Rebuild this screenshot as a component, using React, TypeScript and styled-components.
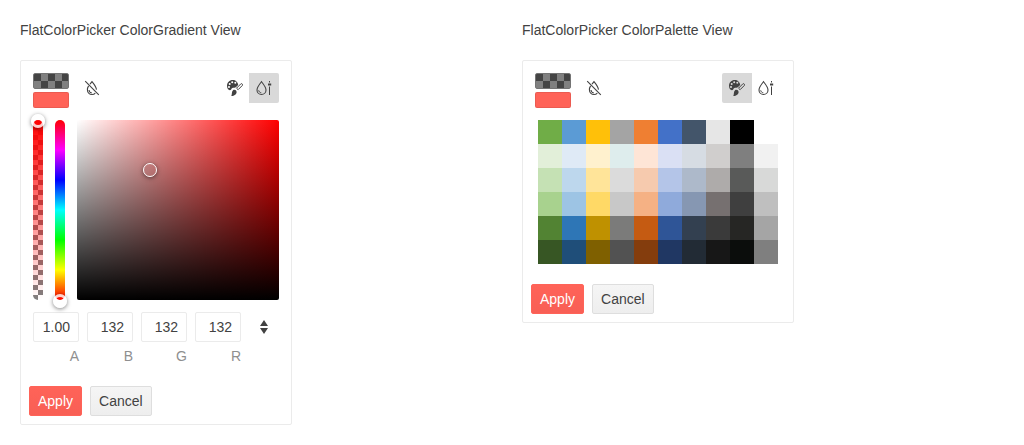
import React, { useId, useState } from 'react';
import styled, { createGlobalStyle, css } from 'styled-components';

const GlobalStyle = createGlobalStyle`
  *, *::before, *::after { box-sizing: border-box; }
  body {
    margin: 0;
    background: #ffffff;
    color: #424242;
    font-family: "Liberation Sans", Arial, sans-serif;
    font-size: 14px;
    line-height: 20px;
  }
  button, input { font: inherit; color: inherit; }
`;

const Page = styled.main`
  display: grid;
  grid-template-columns: 1fr 1fr;
  gap: 20px;
  padding: 20px;
  align-items: start;
`;

const Section = styled.section`
  display: flex;
  flex-direction: column;
  align-items: flex-start;
  gap: 20px;
`;

const Title = styled.h2`
  margin: 0;
  font-size: 14px;
  font-weight: 400;
  line-height: 20px;
`;

const Card = styled.form`
  width: 272px;
  border: 1px solid #ebebeb;
  border-radius: 2px;
  background: #ffffff;
`;

const Header = styled.div`
  display: flex;
  align-items: flex-start;
  gap: 8px;
  padding: 12px 12px 0;
`;

const Preview = styled.div`
  display: flex;
  flex-direction: column;
  gap: 3px;
`;

const Swatch = styled.span<{ $empty?: boolean }>`
  display: block;
  width: 36px;
  height: 16px;
  border: 1px solid rgba(0, 0, 0, 0.08);
  border-radius: 2px;
  background: #ff6358;
  ${(p) =>
    p.$empty &&
    css`
      border-color: #747474;
      background: repeating-conic-gradient(#808080 0 25%, #444444 0 50%) 0 0 / 14px 14px;
    `}
`;

const IconButton = styled.button<{ $active?: boolean; $side?: 'start' | 'end' }>`
  display: flex;
  align-items: center;
  justify-content: center;
  width: 30px;
  height: 30px;
  padding: 0;
  border: 0;
  border-radius: ${(p) =>
    p.$side === 'start' ? '2px 0 0 2px' : p.$side === 'end' ? '0 2px 2px 0' : '2px'};
  background: ${(p) => (p.$active ? '#d9d9d9' : 'transparent')};
  cursor: pointer;
`;

const ViewSwitch = styled.div`
  display: flex;
  margin-left: auto;

  & > * + * {
    margin-left: -1px;
  }
`;

const Body = styled.div`
  padding: 12px;
`;

const Canvas = styled.div`
  display: flex;
  gap: 12px;
  height: 180px;
`;

const Track = styled.div<{ $kind: 'alpha' | 'hue' }>`
  position: relative;
  width: 10px;
  border-radius: 5px;
  background: ${(p) =>
    p.$kind === 'alpha'
      ? 'linear-gradient(to bottom, #ff0000, rgba(255, 0, 0, 0)), repeating-conic-gradient(#808080 0 25%, #ffffff 0 50%) 0 0 / 10px 10px'
      : 'linear-gradient(to top, #ff0000, #ffff00, #00ff00, #00ffff, #0000ff, #ff00ff, #ff0000)'};
`;

const Handle = styled.span<{ $x: string; $y: string; $thin?: boolean }>`
  position: absolute;
  left: ${(p) => p.$x};
  top: ${(p) => p.$y};
  width: 14px;
  height: 14px;
  margin: ${(p) => (p.$thin ? '-7px' : '-6px -7px')};
  border: ${(p) => (p.$thin ? '1px solid #ffffff' : '3px solid rgba(255, 255, 255, 0.8)')};
  border-radius: 50%;
  box-shadow: 0 1px 4px rgba(0, 0, 0, 0.5);
`;

const Gradient = styled.div`
  position: relative;
  flex: 1;
  border-radius: 2px;
  background: linear-gradient(to bottom, transparent, #000000),
    linear-gradient(to right, #ffffff, rgba(255, 255, 255, 0)), #ff0000;
`;

const Channels = styled.div`
  display: flex;
  align-items: flex-start;
  gap: 8px;
  margin-top: 12px;
`;

const Channel = styled.div`
  display: flex;
  flex: 1;
  flex-direction: column;
  gap: 4px;
  text-align: right;
`;

const ChannelInput = styled.input`
  width: 100%;
  height: 30px;
  padding: 4px 8px;
  border: 1px solid #ebebeb;
  border-radius: 2px;
  background: #ffffff;
  text-align: right;
  outline: 0;
`;

const ChannelLabel = styled.label`
  color: #8f8f8f;
`;

const Palette = styled.table`
  margin: 0 auto;
  border-collapse: collapse;
`;

const Tile = styled.td<{ $color: string }>`
  width: 24px;
  height: 24px;
  padding: 0;
  background: ${(p) => p.$color};
`;

const Footer = styled.div`
  display: flex;
  gap: 8px;
  padding: 8px;
`;

const Button = styled.button<{ $primary?: boolean }>`
  height: 30px;
  padding: 4px 8px;
  border: 1px solid ${(p) => (p.$primary ? '#ff6358' : '#dedede')};
  border-radius: 2px;
  background: ${(p) =>
    p.$primary ? 'linear-gradient(#ff6358, #f85f55)' : 'linear-gradient(#f5f5f5, #eeeeee)'};
  color: ${(p) => (p.$primary ? '#ffffff' : '#424242')};
  cursor: pointer;
`;

const DropletSlashIcon = () => (
  <svg width="16" height="16" viewBox="0 0 16 16" fill="none" stroke="#424242" strokeWidth="1.1" aria-hidden="true">
    <path d="M1.200 1.200 14.800 14.800" />
    <path d="M6 4.200 8 1.600c1.600 1.900 4 4.800 4.500 8" />
    <path d="M4.600 5.900C3.800 7.200 3.400 8.500 3.400 9.800c0 2.700 2 4.700 4.600 4.700 1.300 0 2.500-.5 3.300-1.400" />
    <path d="M5 10c.1 1.600 1.100 2.700 2.700 2.900" />
  </svg>
);

const PaletteIcon = () => (
  <svg width="16" height="16" viewBox="0 0 16 16" aria-hidden="true">
    <path
      fill="#424242"
      fillRule="evenodd"
      d="M5.700 0C2.500 0 0 2.600 0 5.800c0 2.500 1.300 4.400 2.900 4.400 1.300 0 1.300-1.700 2.500-2.300 1.300-.6 2.300.2 3.400-.6L11.200 5C10.900 2.100 8.700 0 5.700 0ZM5.200 1.200a1 1 0 1 1 0 2 1 1 0 0 1 0-2ZM8.300 1.800a1 1 0 1 1 0 2 1 1 0 0 1 0-2ZM2.700 2.900a1 1 0 1 1 0 2 1 1 0 0 1 0-2ZM2 5.900a1 1 0 1 1 0 2 1 1 0 0 1 0-2Z"
    />
    <path fill="none" stroke="#424242" strokeLinejoin="round" d="m9.500 8.200 4.400-4.400c.9-.6 2.200.6 1.500 1.600L11.100 9.700Z" />
    <path fill="#424242" d="M6 10.200c1.700-.9 3.500.1 3.600 1.700.1 2.300-2.200 4-5.300 4 1-1.500.1-4.600 1.700-5.700Z" />
  </svg>
);

const DropletSliderIcon = () => (
  <svg width="16" height="16" viewBox="0 0 16 16" fill="none" stroke="#424242" aria-hidden="true">
    <path strokeWidth="1.1" d="M5.500 1.700C3.500 4.200 1 7.200 1 10c0 2.600 2 4.500 4.500 4.500S10 12.600 10 10c0-2.800-2.500-5.800-4.500-8.300Z" />
    <path d="M2.700 10.300c.2 1.400 1.100 2.300 2.600 2.500" />
    <path d="M13.500 1v1.500M13.500 6.500V15" />
    <path strokeWidth="2" d="M12 4.500h3.200" />
  </svg>
);

const SpinIcon = () => (
  <svg width="16" height="16" viewBox="0 0 16 16" fill="#424242" aria-hidden="true">
    <path d="M8 1l4 6H4ZM8 15l4-6H4Z" />
  </svg>
);

const COLORS = [
  ['#70ad47', '#5b9bd5', '#ffc009', '#a4a4a4', '#ef7f32', '#4371c8', '#43556a', '#e6e6e6', '#000000', '#ffffff'],
  ['#e2efd9', '#dfeaf6', '#fff1ce', '#deeded', '#fee5d6', '#dae0f4', '#d6dce3', '#d0cecd', '#7f7f7f', '#f1f1f1'],
  ['#c5e1b4', '#bdd7ed', '#ffe499', '#dbdbdb', '#f6caae', '#b4c5e8', '#adb9ca', '#aeabaa', '#595a59', '#d8d9d8'],
  ['#a8d28e', '#9dc4e4', '#ffd966', '#c8c8c8', '#f5b184', '#8faadb', '#8697b2', '#767070', '#3f3f3f', '#bfbfbf'],
  ['#528333', '#2e76b6', '#bf9100', '#7b7b7a', '#c55b12', '#2f5597', '#334050', '#3a3a3a', '#262624', '#a5a5a5'],
  ['#375624', '#1f4e79', '#7f6000', '#525252', '#843d0d', '#203763', '#222b35', '#171717', '#0b0d0c', '#7f7f7f'],
];

type View = 'gradient' | 'palette';

function PickerHeader({ view }: { view: View }) {
  return (
    <Header>
      <Preview>
        <Swatch $empty />
        <Swatch />
      </Preview>
      <IconButton type="button" aria-label="Clear value">
        <DropletSlashIcon />
      </IconButton>
      <ViewSwitch>
        <IconButton type="button" aria-label="Palette view" $side="start" $active={view === 'palette'} aria-pressed={view === 'palette'}>
          <PaletteIcon />
        </IconButton>
        <IconButton type="button" aria-label="Gradient view" $side="end" $active={view === 'gradient'} aria-pressed={view === 'gradient'}>
          <DropletSliderIcon />
        </IconButton>
      </ViewSwitch>
    </Header>
  );
}

function ChannelField({ name, initial }: { name: string; initial: string }) {
  const id = useId();
  const [value, setValue] = useState(initial);
  return (
    <Channel>
      <ChannelInput id={id} value={value} onChange={(e) => setValue(e.target.value)} />
      <ChannelLabel htmlFor={id}>{name}</ChannelLabel>
    </Channel>
  );
}

function GradientView() {
  return (
    <Body>
      <Canvas>
        <Track $kind="alpha">
          <Handle $x="50%" $y="0" />
        </Track>
        <Track $kind="hue">
          <Handle $x="50%" $y="100%" />
        </Track>
        <Gradient>
          <Handle $thin $x="36%" $y="28%" />
        </Gradient>
      </Canvas>
      <Channels>
        <ChannelField name="A" initial="1.00" />
        <ChannelField name="B" initial="132" />
        <ChannelField name="G" initial="132" />
        <ChannelField name="R" initial="132" />
        <IconButton type="button" aria-label="Change color format">
          <SpinIcon />
        </IconButton>
      </Channels>
    </Body>
  );
}

function PaletteView() {
  return (
    <Body>
      <Palette>
        <tbody>
          {COLORS.map((row, i) => (
            <tr key={i}>
              {row.map((color, j) => (
                <Tile key={j} $color={color} aria-label={color} />
              ))}
            </tr>
          ))}
        </tbody>
      </Palette>
    </Body>
  );
}

function FlatColorPicker({ view }: { view: View }) {
  return (
    <Card onSubmit={(e) => e.preventDefault()}>
      <PickerHeader view={view} />
      {view === 'gradient' ? <GradientView /> : <PaletteView />}
      <Footer>
        <Button type="submit" $primary>
          Apply
        </Button>
        <Button type="button">Cancel</Button>
      </Footer>
    </Card>
  );
}

export default function App() {
  return (
    <>
      <GlobalStyle />
      <Page>
        <Section>
          <Title>FlatColorPicker ColorGradient View</Title>
          <FlatColorPicker view="gradient" />
        </Section>
        <Section>
          <Title>FlatColorPicker ColorPalette View</Title>
          <FlatColorPicker view="palette" />
        </Section>
      </Page>
    </>
  );
}
